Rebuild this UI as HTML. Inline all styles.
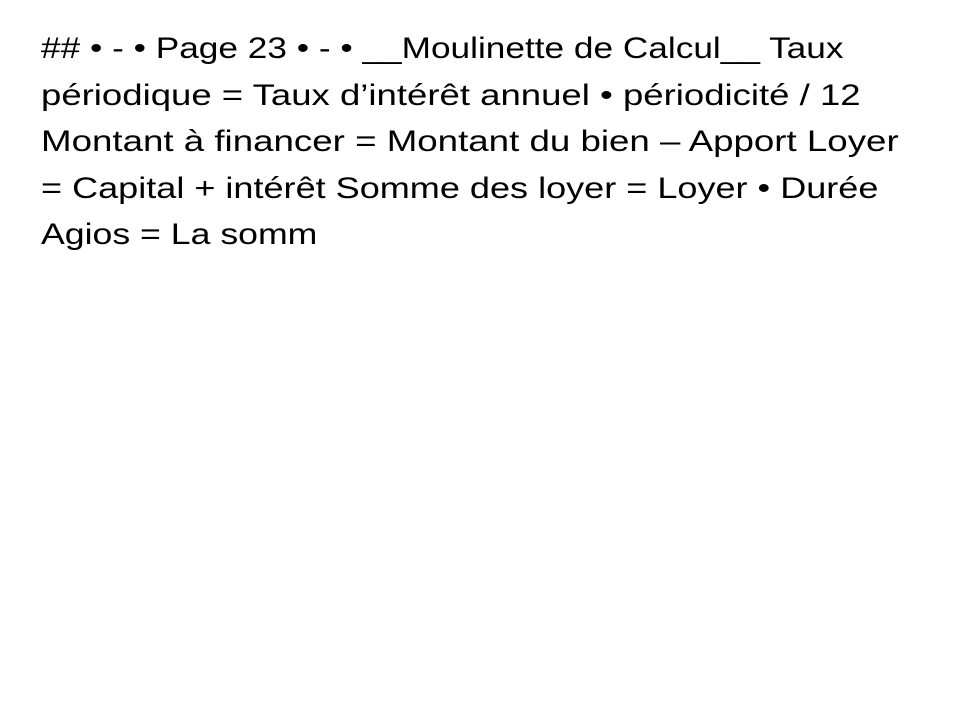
<!DOCTYPE html>
<html><head><meta charset="utf-8"><style>
html,body{margin:0;padding:0;background:#fff;width:960px;height:720px;overflow:hidden}
.t{position:absolute;left:41px;top:26px;font-family:"Liberation Sans",sans-serif;font-size:30px;line-height:46.5px;color:#000;white-space:nowrap}
.t div{transform-origin:0 0}
</style></head><body>
<div class="t">
<div style="transform:scaleX(1.174)">## • - • Page 23 • - • __Moulinette de Calcul__ Taux</div>
<div style="transform:scaleX(1.218)">périodique = Taux d’intérêt annuel • périodicité / 12</div>
<div style="transform:scaleX(1.223)">Montant à financer = Montant du bien – Apport Loyer</div>
<div style="transform:scaleX(1.202)">= Capital + intérêt Somme des loyer = Loyer • Durée</div>
<div style="transform:scaleX(1.188)">Agios = La somm</div>
</div>
</body></html>
